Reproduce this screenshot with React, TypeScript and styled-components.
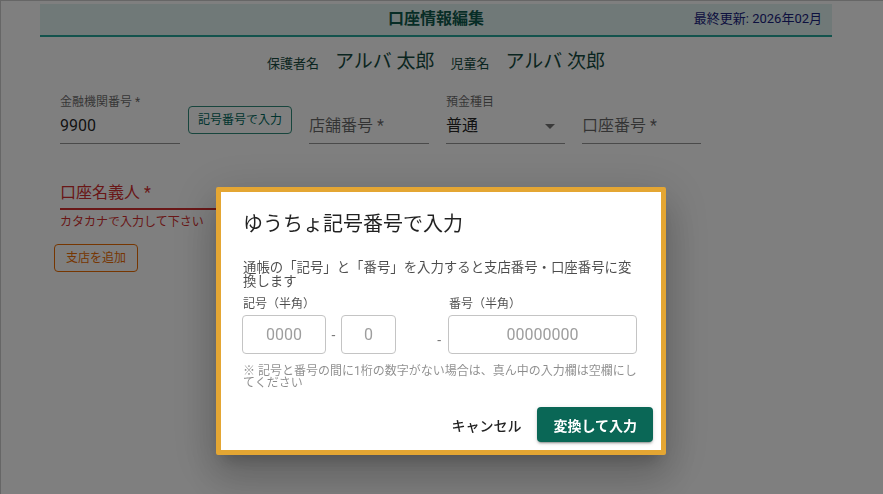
import React from 'react';
import styled, { createGlobalStyle } from 'styled-components';

const GlobalStyle = createGlobalStyle`
  html, body {
    margin: 0;
    padding: 0;
  }
  body {
    font-family: Roboto, "Noto Sans CJK JP", sans-serif;
    background: #fff;
    overflow: hidden;
  }
  * {
    box-sizing: border-box;
  }
`;

const Frame = styled.div`
  width: 883px;
  height: 494px;
  border-top: 1px solid #cccccc;
  border-left: 1px solid #cccccc;
  background: #fff;
  overflow: hidden;
`;

const Container = styled.div`
  width: 792px;
  margin-left: 39px;
  padding-top: 3px;
`;

const Header = styled.header`
  display: grid;
  grid-template-columns: 1fr auto 1fr;
  align-items: center;
  height: 33px;
  padding: 0 10px 2px;
  background: #e0f2f1;
  border-bottom: 2px solid #26a69a;
`;

const Title = styled.h1`
  grid-column: 2;
  margin: 0;
  font-size: 16px;
  line-height: 20px;
  font-weight: 700;
  color: #0f5a4c;
`;

const Updated = styled.span`
  grid-column: 3;
  justify-self: end;
  font-size: 13px;
  line-height: 16px;
  color: #1a237e;
`;

const NamesRow = styled.div`
  display: flex;
  justify-content: center;
  align-items: baseline;
  margin-top: 11px;
  gap: 16px;
  color: #154a40;
`;

const NameGroup = styled.div`
  display: flex;
  align-items: baseline;
  gap: 16px;
`;

const NameLabel = styled.span`
  font-size: 13px;
`;

const NameValue = styled.span`
  font-size: 19px;
  line-height: 28px;
`;

const Form = styled.div`
  padding: 0 20px;
`;

const FieldRow = styled.div`
  display: flex;
  align-items: flex-end;
  gap: 17px;
  margin-top: 19px;
`;

const FieldGroup = styled.div`
  display: flex;
  gap: 8px;
`;

const Field = styled.div<{ $width?: number }>`
  position: relative;
  display: flex;
  flex-direction: column;
  justify-content: flex-end;
  width: ${(p) => p.$width ?? 120}px;
  height: 49px;
  border-bottom: 1px solid rgba(0, 0, 0, 0.42);
`;

const FieldLabel = styled.span`
  position: absolute;
  top: 0;
  left: 0;
  font-size: 12px;
  line-height: 14px;
  color: rgba(0, 0, 0, 0.6);
`;

const FieldValue = styled.div<{ $placeholder?: boolean }>`
  display: flex;
  align-items: center;
  justify-content: space-between;
  height: 24px;
  margin-bottom: 5px;
  font-size: 16px;
  line-height: 24px;
  color: ${(p) => (p.$placeholder ? 'rgba(0, 0, 0, 0.6)' : 'rgba(0, 0, 0, 0.87)')};
`;

const OutlineButton = styled.button<{ $tone: 'teal' | 'orange' }>`
  height: 28px;
  padding: 0 9px;
  border-radius: 4px;
  background: transparent;
  font-family: inherit;
  font-size: 12px;
  line-height: 16px;
  color: ${(p) => (p.$tone === 'teal' ? '#00695c' : '#ed6c02')};
  border: 1px solid ${(p) => (p.$tone === 'teal' ? '#2e8b7a' : '#ed6c02')};
  align-self: center;
`;

const NameField = styled.div`
  width: 420px;
  margin-top: 37px;
  padding-bottom: 3px;
  border-bottom: 2px solid #d32f2f;
  font-size: 16px;
  line-height: 24px;
  color: #d32f2f;
`;

const HelperText = styled.div`
  margin-top: 4px;
  font-size: 12px;
  line-height: 16px;
  color: #d32f2f;
`;

const AddBranchButton = styled(OutlineButton)`
  display: block;
  width: 84px;
  margin: 14px 0 0 -6px;
  padding: 0;
`;

const Overlay = styled.div`
  position: fixed;
  inset: 0;
  display: flex;
  justify-content: center;
  align-items: flex-start;
  padding-top: 187px;
  background: rgba(0, 0, 0, 0.5);
`;

const Dialog = styled.div`
  width: 450px;
  margin-right: 1px;
  background: #fff;
  border: 5px solid #e4a633;
  border-radius: 2px;
  box-shadow: 0 11px 15px -7px rgba(0, 0, 0, 0.2), 0 24px 38px 3px rgba(0, 0, 0, 0.14),
    0 9px 46px 8px rgba(0, 0, 0, 0.12);
`;

const DialogTitle = styled.h2`
  margin: 0;
  padding: 16px 24px 0 22px;
  font-size: 20px;
  line-height: 32px;
  font-weight: 400;
  color: rgba(0, 0, 0, 0.87);
`;

const DialogContent = styled.div`
  padding: 21px 23px 0 22px;
`;

const Description = styled.p`
  margin: 0;
  font-size: 13.4px;
  line-height: 14px;
  color: rgba(0, 0, 0, 0.7);
`;

const CodeGrid = styled.div`
  display: grid;
  grid-template-columns: 84px 15px 55px 52px 189px;
  margin-left: -1px;
`;

const CodeLabels = styled(CodeGrid)`
  margin-top: 8px;
  margin-left: 0;
`;

const CodeLabel = styled.span<{ $col: string }>`
  grid-column: ${(p) => p.$col};
  font-size: 12px;
  line-height: 14px;
  color: rgba(0, 0, 0, 0.7);
`;

const CodeInputs = styled(CodeGrid)`
  margin-top: 4px;
  height: 39px;
`;

const CodeInput = styled.input`
  width: 100%;
  height: 39px;
  padding: 0 8px;
  border: 1px solid #c4c4c4;
  border-radius: 4px;
  font-family: Roboto, sans-serif;
  font-size: 16px;
  text-align: center;
  color: rgba(0, 0, 0, 0.87);
  &::placeholder {
    color: #9e9e9e;
  }
`;

const Dash = styled.span<{ $low?: boolean }>`
  display: flex;
  justify-content: ${(p) => (p.$low ? 'flex-end' : 'center')};
  align-items: ${(p) => (p.$low ? 'flex-end' : 'center')};
  padding: ${(p) => (p.$low ? '0 7px 6px 0' : '0')};
  font-size: 14px;
  color: #777;
`;

const Note = styled.p`
  margin: 11px 0 0;
  font-size: 12px;
  line-height: 12px;
  color: rgba(0, 0, 0, 0.45);
`;

const DialogActions = styled.div`
  display: flex;
  justify-content: flex-end;
  align-items: center;
  gap: 8px;
  margin-top: 10px;
  padding: 8px;
`;

const TextButton = styled.button`
  height: 35px;
  padding: 0 8px;
  border: none;
  background: transparent;
  font-family: inherit;
  font-size: 14px;
  font-weight: 500;
  color: rgba(0, 0, 0, 0.87);
`;

const PrimaryButton = styled.button`
  height: 35px;
  padding: 0 16px;
  border: none;
  border-radius: 4px;
  background: #0a6756;
  font-family: inherit;
  font-size: 14px;
  font-weight: 700;
  color: #fff;
  box-shadow: 0 3px 1px -2px rgba(0, 0, 0, 0.2), 0 2px 2px 0 rgba(0, 0, 0, 0.14),
    0 1px 5px 0 rgba(0, 0, 0, 0.12);
`;

const ArrowDropDown = () => (
  <svg width="24" height="24" viewBox="0 0 24 24" fill="rgba(0,0,0,0.54)" style={{ marginRight: 3 }}>
    <path d="M7 10l5 5 5-5z" />
  </svg>
);

export default function App() {
  return (
    <>
      <GlobalStyle />
      <Frame>
        <Container>
          <Header>
            <Title>口座情報編集</Title>
            <Updated>最終更新: 2026年02月</Updated>
          </Header>
          <NamesRow>
            <NameGroup>
              <NameLabel>保護者名</NameLabel>
              <NameValue>アルバ 太郎</NameValue>
            </NameGroup>
            <NameGroup>
              <NameLabel>児童名</NameLabel>
              <NameValue>アルバ 次郎</NameValue>
            </NameGroup>
          </NamesRow>
          <Form>
            <FieldRow>
              <FieldGroup>
                <Field>
                  <FieldLabel>金融機関番号 *</FieldLabel>
                  <FieldValue>9900</FieldValue>
                </Field>
                <OutlineButton $tone="teal">記号番号で入力</OutlineButton>
              </FieldGroup>
              <Field>
                <FieldValue $placeholder>店舗番号 *</FieldValue>
              </Field>
              <Field $width={119}>
                <FieldLabel>預金種目</FieldLabel>
                <FieldValue>
                  普通
                  <ArrowDropDown />
                </FieldValue>
              </Field>
              <Field $width={119}>
                <FieldValue $placeholder>口座番号 *</FieldValue>
              </Field>
            </FieldRow>
            <NameField>口座名義人 *</NameField>
            <HelperText>カタカナで入力して下さい</HelperText>
            <AddBranchButton $tone="orange">支店を追加</AddBranchButton>
          </Form>
        </Container>
      </Frame>
      <Overlay>
        <Dialog>
          <DialogTitle>ゆうちょ記号番号で入力</DialogTitle>
          <DialogContent>
            <Description>
              通帳の「記号」と「番号」を入力すると支店番号・口座番号に変換します
            </Description>
            <CodeLabels>
              <CodeLabel $col="1 / 4">記号（半角）</CodeLabel>
              <CodeLabel $col="5">番号（半角）</CodeLabel>
            </CodeLabels>
            <CodeInputs>
              <CodeInput placeholder="0000" />
              <Dash>-</Dash>
              <CodeInput placeholder="0" />
              <Dash $low>-</Dash>
              <CodeInput placeholder="00000000" />
            </CodeInputs>
            <Note>※ 記号と番号の間に1桁の数字がない場合は、真ん中の入力欄は空欄にしてください</Note>
          </DialogContent>
          <DialogActions>
            <TextButton>キャンセル</TextButton>
            <PrimaryButton>変換して入力</PrimaryButton>
          </DialogActions>
        </Dialog>
      </Overlay>
    </>
  );
}
